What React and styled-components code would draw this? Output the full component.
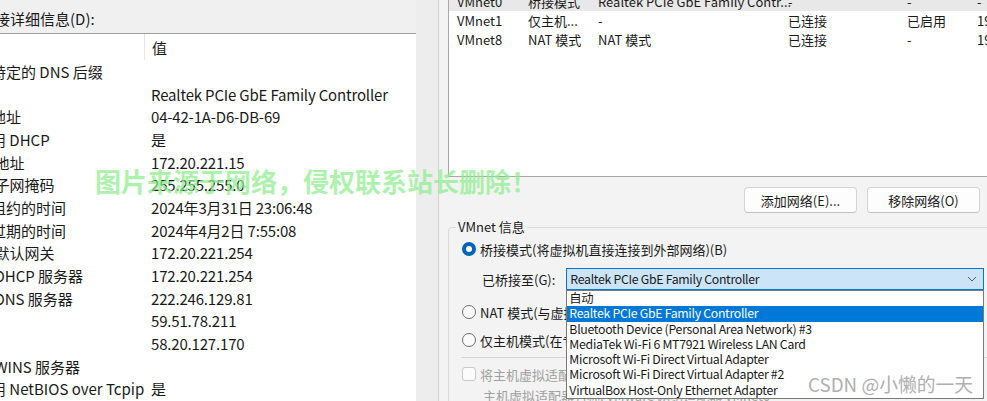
import React from "react";
import styled, { createGlobalStyle } from "styled-components";

const GlobalStyle = createGlobalStyle`
  html, body {
    margin: 0;
    padding: 0;
    overflow: hidden;
    background: #ffffff;
  }
  body {
    font-family: "Noto Sans CJK SC", "Noto Sans", sans-serif;
    color: #1a1a1a;
  }
`;

const details = [
  ["连接特定的 DNS 后缀", ""],
  ["描述", "Realtek PCIe GbE Family Controller"],
  ["物理地址", "04-42-1A-D6-DB-69"],
  ["已启用 DHCP", "是"],
  ["IPv4 地址", "172.20.221.15"],
  ["IPv4 子网掩码", "255.255.255.0"],
  ["获得租约的时间", "2024年3月31日 23:06:48"],
  ["租约过期的时间", "2024年4月2日 7:55:08"],
  ["IPv4 默认网关", "172.20.221.254"],
  ["IPv4 DHCP 服务器", "172.20.221.254"],
  ["IPv4 DNS 服务器", "222.246.129.81"],
  ["", "59.51.78.211"],
  ["", "58.20.127.170"],
  ["IPv4 WINS 服务器", ""],
  ["已启用 NetBIOS over Tcpip", "是"],
];

const networks = [
  ["VMnet0", "桥接模式", "Realtek PCIe GbE Family Contr...", "-", "-", "-", true],
  ["VMnet1", "仅主机...", "-", "已连接", "已启用", "19", false],
  ["VMnet8", "NAT 模式", "NAT 模式", "已连接", "-", "19", false],
];

const adapters = [
  "自动",
  "Realtek PCIe GbE Family Controller",
  "Bluetooth Device (Personal Area Network) #3",
  "MediaTek Wi-Fi 6 MT7921 Wireless LAN Card",
  "Microsoft Wi-Fi Direct Virtual Adapter",
  "Microsoft Wi-Fi Direct Virtual Adapter #2",
  "VirtualBox Host-Only Ethernet Adapter",
];

function App() {
  return (
    <>
      <GlobalStyle />
      <StScreen>
        <StDetailsWindow>
          <StDetailsHeader>
            <span>网络连接详细信息(D):</span>
          </StDetailsHeader>
          <StDetailsList>
            <StListHead>
              <StHeadCell>属性</StHeadCell>
              <StHeadCell $last>值</StHeadCell>
            </StListHead>
            {details.map(([name, value], i) => (
              <StDetailRow key={i}>
                <StDetailName>{name}</StDetailName>
                <StDetailValue>{value}</StDetailValue>
              </StDetailRow>
            ))}
          </StDetailsList>
        </StDetailsWindow>
        <StWindowGap />
        <StEditorWindow>
          <StNetList>
            {networks.map(([name, type, ext, host, dhcp, subnet, selected]) => (
              <StNetRow key={name} $selected={selected}>
                <span>{name}</span>
                <span>{type}</span>
                <span>{ext}</span>
                <span>{host}</span>
                <span>{dhcp}</span>
                <span>{subnet}</span>
              </StNetRow>
            ))}
          </StNetList>
          <StButtonBar>
            <StButton>添加网络(E)...</StButton>
            <StButton>移除网络(O)</StButton>
          </StButtonBar>
          <StGroup>
            <StLegend>VMnet 信息</StLegend>
            <StOption $gap={5}>
              <StRadio $checked />
              <span>桥接模式(将虚拟机直接连接到外部网络)(B)</span>
            </StOption>
            <StBridgeRow>
              <span>已桥接至(G):</span>
              <StSelectWrap>
                <StSelect>
                  <span>Realtek PCIe GbE Family Controller</span>
                  <svg width="10" height="6" viewBox="0 0 10 6">
                    <path d="M1 1l4 4 4-4" fill="none" stroke="#5a5a5a" strokeWidth="1" />
                  </svg>
                </StSelect>
                <StDropdown>
                  {adapters.map((item, i) => (
                    <StDropItem key={item} $active={i === 1}>
                      {item}
                    </StDropItem>
                  ))}
                </StDropdown>
              </StSelectWrap>
            </StBridgeRow>
            <StOption $gap={13}>
              <StRadio />
              <span>NAT 模式(与虚拟机共享主机的 IP 地址)(N)</span>
            </StOption>
            <StOption $gap={10}>
              <StRadio />
              <span>仅主机模式(在专用网络内连接虚拟机)(H)</span>
            </StOption>
            <StDivider />
            <StOption $gap={7} $disabled>
              <StCheck />
              <span>将主机虚拟适配器连接到此网络(V)</span>
            </StOption>
            <StSubText>主机虚拟适配器名称: VMware 网络适配器 VMnet0</StSubText>
          </StGroup>
        </StEditorWindow>
        <StWatermark>图片来源于网络，侵权联系站长删除！</StWatermark>
        <StCredit>CSDN @小懒的一天</StCredit>
      </StScreen>
    </>
  );
}

export default App;

const StScreen = styled.div`
  position: relative;
  display: flex;
  width: 987px;
  height: 401px;
  overflow: hidden;
`;

const StDetailsWindow = styled.div`
  display: flex;
  flex-direction: column;
  width: 416px;
  flex-shrink: 0;
  overflow: hidden;
  background: #ffffff;
  font-size: 15px;
`;

const StDetailsHeader = styled.div`
  display: flex;
  align-items: center;
  flex-shrink: 0;
  height: 34px;
  padding-top: 4px;
  box-sizing: border-box;
  background: #f0f0f0;
  border-bottom: 1px solid #a0a0a0;
  white-space: nowrap;
  span {
    margin-left: -50px;
  }
`;

const StDetailsList = styled.div`
  display: flex;
  flex-direction: column;
  flex-shrink: 0;
  margin-left: -39px;
`;

const StListHead = styled.div`
  display: flex;
  height: 26px;
  align-items: center;
`;

const StHeadCell = styled.div`
  width: ${(p) => (p.$last ? "auto" : "183px")};
  padding-left: ${(p) => (p.$last ? "7px" : "0")};
  border-right: ${(p) => (p.$last ? "none" : "1px solid #e5e5e5")};
  height: 100%;
  display: flex;
  align-items: center;
  white-space: nowrap;
`;

const StDetailRow = styled.div`
  display: grid;
  grid-template-columns: 190px 1fr;
  height: 22.7px;
  align-items: center;
  white-space: nowrap;
`;

const StDetailName = styled.div`
  overflow: hidden;
`;

const StDetailValue = styled.div`
  letter-spacing: -0.18px;
`;

const StWindowGap = styled.div`
  width: 22px;
  flex-shrink: 0;
  background: #ededed;
  border-right: 1px solid #d2d2d2;
`;

const StEditorWindow = styled.div`
  display: flex;
  flex-direction: column;
  flex: 1;
  min-width: 0;
  padding-left: 9px;
  background: #f3f3f3;
  font-size: 13px;
  color: #1a1a1a;
  & > * {
    flex-shrink: 0;
  }
`;

const StNetList = styled.div`
  display: flex;
  flex-direction: column;
  height: 176px;
  margin-right: -10px;
  background: #ffffff;
  border-left: 1px solid #a8a8a8;
  border-bottom: 1px solid #a8a8a8;
  overflow: hidden;
`;

const StNetRow = styled.div`
  display: grid;
  grid-template-columns: 71px 70px 190px 119px 70px 1fr;
  flex-shrink: 0;
  height: 19px;
  align-items: center;
  padding-left: 8px;
  white-space: nowrap;
  background: ${(p) => (p.$selected ? "#e8e8e8" : "transparent")};
  &:first-child {
    margin-top: -8px;
  }
`;

const StButtonBar = styled.div`
  display: flex;
  justify-content: flex-end;
  gap: 10px;
  padding: 10px 7px 0 0;
`;

const StButton = styled.div`
  display: flex;
  align-items: center;
  justify-content: center;
  width: 113px;
  height: 26px;
  box-sizing: border-box;
  background: #fdfdfd;
  border: 1px solid #d4d4d4;
  border-bottom-color: #c2c2c2;
  border-radius: 4px;
  font-size: 13px;
`;

const StGroup = styled.fieldset`
  position: relative;
  margin: 6px -20px 0 0;
  padding: 0 0 0 13px;
  border: 1px solid #d9d9d9;
  border-radius: 4px;
  min-width: 0;
`;

const StLegend = styled.legend`
  margin-left: -6px;
  padding: 0 2px;
  line-height: 16px;
`;

const StOption = styled.div`
  display: flex;
  align-items: center;
  gap: 4px;
  height: 18px;
  margin-top: ${(p) => p.$gap || 3}px;
  white-space: nowrap;
  color: ${(p) => (p.$disabled ? "#a0a0a0" : "#1a1a1a")};
`;

const StRadio = styled.span`
  width: 14px;
  height: 14px;
  box-sizing: border-box;
  border-radius: 50%;
  flex-shrink: 0;
  background: ${(p) => (p.$checked ? "#ffffff" : "#fafafa")};
  border: ${(p) => (p.$checked ? "4px solid #0064b8" : "1px solid #6e6e6e")};
`;

const StCheck = styled.span`
  width: 14px;
  height: 14px;
  box-sizing: border-box;
  border-radius: 3px;
  flex-shrink: 0;
  background: #fbfbfb;
  border: 1px solid #c8c8c8;
`;

const StBridgeRow = styled.div`
  display: flex;
  align-items: center;
  gap: 11px;
  margin-top: 10px;
  padding-left: 20px;
  white-space: nowrap;
`;

const StSelectWrap = styled.div`
  position: relative;
`;

const StSelect = styled.div`
  display: flex;
  align-items: center;
  justify-content: space-between;
  width: 418px;
  height: 22px;
  box-sizing: border-box;
  padding: 0 6px 0 3px;
  background: #cce4f7;
  border: 1px solid #0078d4;
  font-size: 12.3px;
  letter-spacing: -0.3px;
`;

const StDropdown = styled.div`
  position: absolute;
  top: 22px;
  left: 0;
  width: 418px;
  box-sizing: border-box;
  background: #ffffff;
  border: 1px solid #7a7a7a;
  z-index: 2;
`;

const StDropItem = styled.div`
  height: 15.3px;
  line-height: 15.3px;
  padding-left: 2px;
  font-size: 12.3px;
  letter-spacing: -0.3px;
  color: ${(p) => (p.$active ? "#ffffff" : "#1a1a1a")};
  background: ${(p) => (p.$active ? "#0078d7" : "transparent")};
`;

const StDivider = styled.div`
  height: 1px;
  margin: 8px 0 0 -1px;
  background: #d4d4d4;
`;

const StSubText = styled.div`
  margin: 3px 0 0 21px;
  color: #a0a0a0;
  white-space: nowrap;
`;

const StWatermark = styled.div`
  position: absolute;
  left: 95px;
  top: 162px;
  font-size: 26px;
  font-weight: 700;
  color: rgba(140, 238, 140, 0.72);
  white-space: nowrap;
  z-index: 5;
`;

const StCredit = styled.div`
  position: absolute;
  left: 808px;
  top: 370px;
  font-size: 18.8px;
  color: #b0b0b0;
  text-shadow: 0 0 2px #ffffff, 0 0 2px #ffffff;
  white-space: nowrap;
  z-index: 5;
`;
